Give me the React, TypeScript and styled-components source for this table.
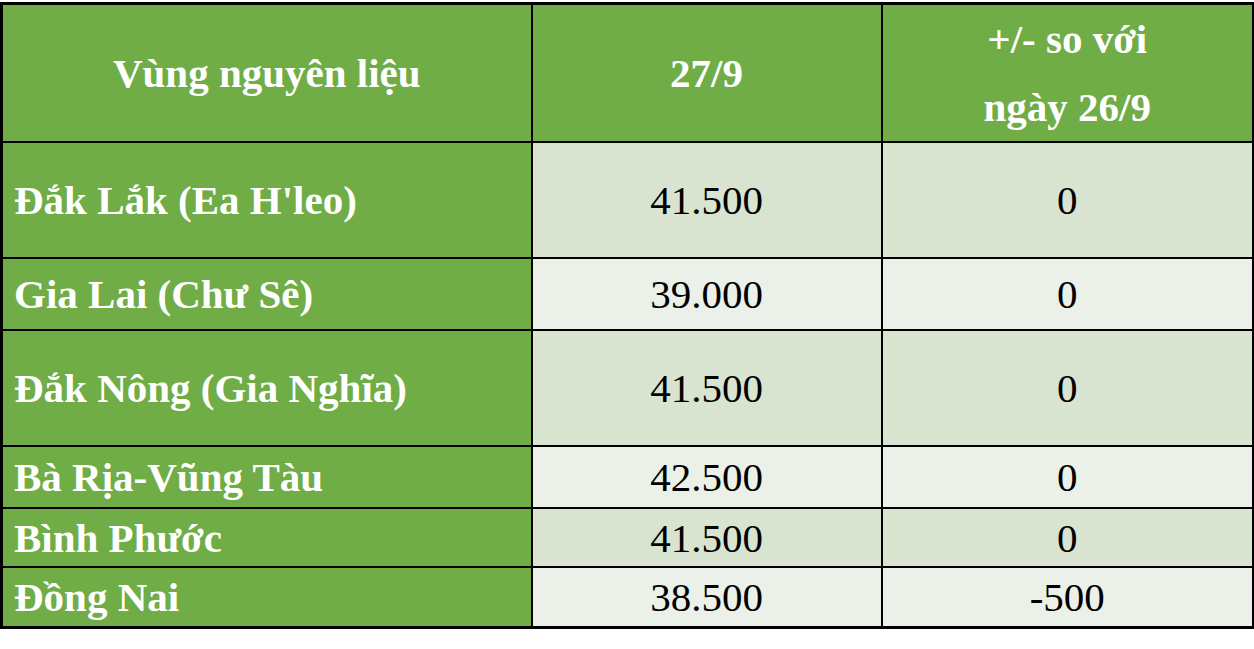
import React from "react";
import styled, { createGlobalStyle } from "styled-components";

type Row = {
  region: string;
  price: string;
  change: string;
  height: number;
};

const rows: Row[] = [
  { region: "Đắk Lắk (Ea H'leo)", price: "41.500", change: "0", height: 116 },
  { region: "Gia Lai (Chư Sê)", price: "39.000", change: "0", height: 72 },
  { region: "Đắk Nông (Gia Nghĩa)", price: "41.500", change: "0", height: 116 },
  { region: "Bà Rịa-Vũng Tàu", price: "42.500", change: "0", height: 62 },
  { region: "Bình Phước", price: "41.500", change: "0", height: 59 },
  { region: "Đồng Nai", price: "38.500", change: "-500", height: 60 },
];

const GlobalStyle = createGlobalStyle`
  html, body {
    margin: 0;
    padding: 0;
    background: #ffffff;
  }
  body {
    font-family: "Liberation Serif", "Times New Roman", serif;
  }
`;

export default function App() {
  return (
    <>
      <GlobalStyle />
      <Page>
        <PriceTable>
          <colgroup>
            <col style={{ width: 530 }} />
            <col style={{ width: 350 }} />
            <col style={{ width: 372 }} />
          </colgroup>
          <thead>
            <tr>
              <HeadCell>Vùng nguyên liệu</HeadCell>
              <HeadCell>27/9</HeadCell>
              <HeadCell>
                +/- so với
                <br />
                ngày 26/9
              </HeadCell>
            </tr>
          </thead>
          <tbody>
            {rows.map((row, index) => (
              <BodyRow key={row.region} $height={row.height}>
                <RegionCell>{row.region}</RegionCell>
                <ValueCell $shade={index % 2 === 0}>{row.price}</ValueCell>
                <ValueCell $shade={index % 2 === 0}>{row.change}</ValueCell>
              </BodyRow>
            ))}
          </tbody>
        </PriceTable>
      </Page>
    </>
  );
}

const Page = styled.div`
  padding: 2px 1px 0 0;
`;

const PriceTable = styled.table`
  width: 1253px;
  border-collapse: collapse;
  table-layout: fixed;
  border: 3px solid #000;
`;

const HeadCell = styled.th`
  height: 136px;
  padding: 0;
  background: #70ad47;
  color: #ffffff;
  border: 2px solid #000;
  font-size: 41px;
  line-height: 68px;
  font-weight: 700;
  text-align: center;
  vertical-align: middle;
`;

const BodyRow = styled.tr<{ $height: number }>`
  height: ${(p) => p.$height}px;
`;

const RegionCell = styled.td`
  padding: 0 0 0 11px;
  background: #70ad47;
  color: #ffffff;
  border: 2px solid #000;
  font-size: 41px;
  font-weight: 700;
  text-align: left;
  vertical-align: middle;
  white-space: nowrap;
`;

const ValueCell = styled.td<{ $shade: boolean }>`
  padding: 0;
  background: ${(p) => (p.$shade ? "#d8e4d0" : "#ebf0e8")};
  color: #000;
  border: 2px solid #000;
  font-size: 41px;
  text-align: center;
  vertical-align: middle;
`;
